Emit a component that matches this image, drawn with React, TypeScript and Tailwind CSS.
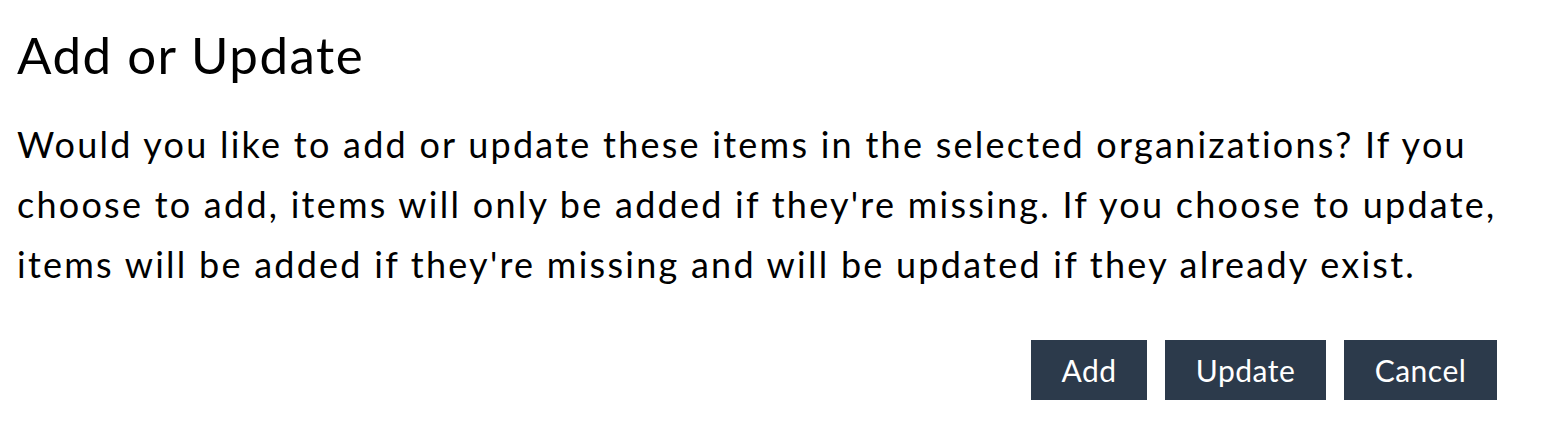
import React from "react";

export default function App() {
  return (
    <div className="w-[1542px] h-[424px] bg-white text-black pl-[17px] pr-[45px] pt-[29px]" style={{ fontFamily: "Lato, 'Noto Sans', sans-serif" }}>
      <h1 className="text-[51px] leading-[51px] font-normal m-0 tracking-[1.5px]">Add or Update</h1>
      <p className="mt-[34px] text-[36px] leading-[60px] whitespace-nowrap tracking-[2.25px]">
        Would you like to add or update these items in the selected organizations? If you
        <br />
        choose to add, items will only be added if they're missing. If you choose to update,
        <br />
        items will be added if they're missing and will be updated if they already exist.
      </p>
      <div className="mt-[46px] flex justify-end gap-[18px]">
        <button className="w-[116px] h-[60px] bg-[#2c3a4b] text-white text-[30px] tracking-[0.5px] flex items-center justify-center">Add</button>
        <button className="w-[161px] h-[60px] bg-[#2c3a4b] text-white text-[30px] tracking-[0.5px] flex items-center justify-center">Update</button>
        <button className="w-[153px] h-[60px] bg-[#2c3a4b] text-white text-[30px] tracking-[0.5px] flex items-center justify-center">Cancel</button>
      </div>
    </div>
  );
}
